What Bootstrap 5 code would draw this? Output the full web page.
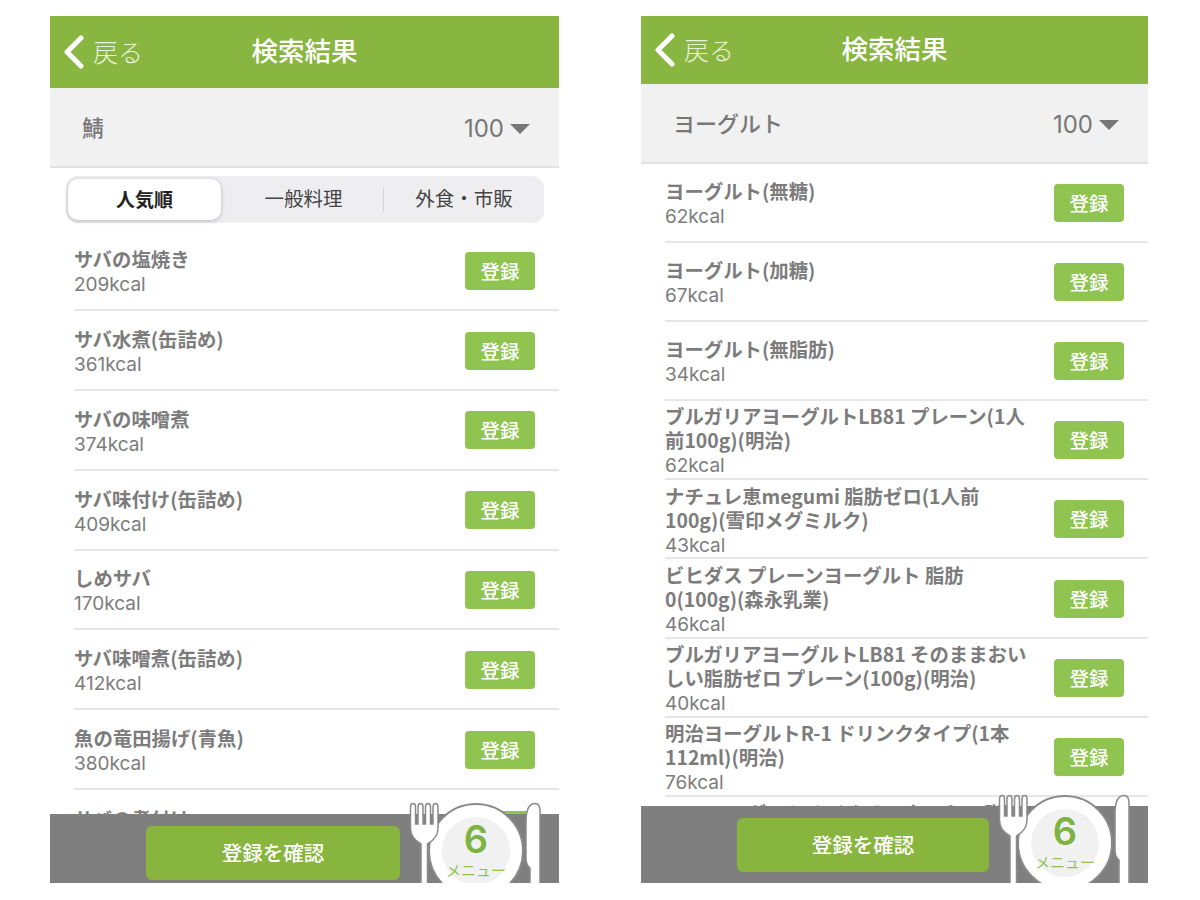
<!DOCTYPE html>
<html lang="ja">
<head>
<meta charset="utf-8">
<title>検索結果</title>
<link rel="stylesheet" href="https://cdn.jsdelivr.net/npm/bootstrap@5.3.0/dist/css/bootstrap.min.css">
<style>
body{background:#fff;font-family:"Noto Sans CJK JP","Noto Sans",sans-serif;color:#777;margin:0;height:900px;overflow:hidden}
.stage{padding:16px 0 0 50px;gap:82px}
.phone{height:867px;overflow:hidden;position:relative;background:#fff}
.phone-a{width:509px}
.phone-b{width:507px}
.topbar{background:#89b640;color:#fff;position:relative;flex:none}
.phone-a .topbar{height:72px}
.phone-b .topbar{height:68px}
.backlink{position:absolute;left:13px;top:50%;transform:translateY(-50%);gap:8px;color:#e9f2d8;font-size:25px;line-height:1;font-weight:300}
.backlink span{padding-bottom:2px}
.screen-title{font-size:26.500px;font-weight:500;line-height:1;padding-bottom:4px}
.phone-a .screen-title{padding-bottom:3px}
.searchband{background:#f1f1f1;border-bottom:2px solid #e2e2e2;height:80px;flex:none;font-size:22px;color:#777;font-weight:500;padding:0 29px 2px 32px}
.countbox{gap:6px;font-family:"Inter","Liberation Sans",sans-serif;font-size:24px;line-height:1;font-weight:400;padding-top:6px}
.caret{width:0;height:0;border-left:10px solid transparent;border-right:10px solid transparent;border-top:10px solid #777}
.segbar{height:47px;margin:8px 15px 8.500px 16px;background:#eeeef0;border-radius:12px;padding:3px 0 3px 2px;display:grid;grid-template-columns:153px 162px 161px;font-size:19.500px;color:#444;flex:none}
.segitem{display:flex;align-items:center;justify-content:center;line-height:1;padding-bottom:3px}
.segitem.is-middle{padding-left:3px}
.segitem.is-on{background:#fff;border-radius:10px;box-shadow:0 1px 4px rgba(0,0,0,.25);color:#222;font-weight:700;font-size:19px}
.segitem.has-rule{border-left:1px solid #d4d4d4;margin:8px 0;padding-bottom:4px}
.resultlist{flex:1 1 auto;min-height:0;overflow:hidden}
.rowitem{height:79.800px;margin-left:24px;padding-right:24px;border-bottom:2px solid #e6e6e6;gap:10px}
.phone-b .rowitem{height:79.200px}
.phone-b .rowitem:first-child{height:78.700px}
.rowitem:last-child{border-bottom:0}
.rowtext{width:362px;color:#7c7c7c;padding-top:4px}
.foodname{font-size:19.400px;font-weight:700;line-height:24px}
.foodcal{font-family:"Inter","Liberation Sans",sans-serif;font-size:19px;line-height:24.500px;padding-top:2px}
.addbtn{background:#8fc451;color:#fff;width:70px;height:38px;border-radius:4px;border:0;font-size:19.500px;font-weight:500;padding:0;line-height:38px;flex:none;margin-top:1px}
.bottombar{background:#7f7f7f;position:relative;flex:none;padding:12px 0 0 96px}
.phone-a .bottombar{height:69px}
.phone-b .bottombar{height:77px}
.confirmbtn{background:#87b53e;color:#fff;height:54px;border:0;border-radius:6px;font-size:20.500px;font-weight:500;padding:0 0 3px;line-height:50px}
.phone-a .confirmbtn{width:254px}
.phone-b .confirmbtn{width:252px}
.tableset{position:absolute;left:357px;top:-12px;width:140px;height:100px}
.tableset svg{position:absolute;left:0;top:0}
.dishcount{position:absolute;left:69px;top:15px;width:80px;margin-left:-40px;text-align:center;color:#7cb342;font-family:"Inter","Liberation Sans",sans-serif;font-size:38px;line-height:44px;font-weight:600}
.dishlabel{position:absolute;left:69px;top:58px;width:80px;margin-left:-40px;text-align:center;color:#8fc451;font-size:15px;line-height:20px;white-space:nowrap}
.phone-b .tableset{left:355px}
</style>
</head>
<body>
<main class="stage d-flex align-items-start">

<section class="phone phone-a d-flex flex-column">
  <header class="topbar d-flex align-items-center justify-content-center">
    <a class="backlink d-flex align-items-center text-decoration-none">
      <svg width="22" height="34" viewBox="0 0 22 34" fill="none"><path d="M18 3 L4 17 L18 31" stroke="#fff" stroke-width="5" stroke-linecap="round" stroke-linejoin="round"/></svg>
      <span>戻る</span>
    </a>
    <div class="screen-title">検索結果</div>
  </header>
  <div class="searchband d-flex align-items-center justify-content-between">
    <span>鯖</span>
    <div class="countbox d-flex align-items-center"><span>100</span><i class="caret"></i></div>
  </div>
  <div class="segbar">
    <div class="segitem is-on">人気順</div>
    <div class="segitem is-middle">一般料理</div>
    <div class="segitem has-rule">外食・市販</div>
  </div>
  <div class="resultlist">
    <div class="rowitem d-flex align-items-center justify-content-between"><div class="rowtext"><div class="foodname">サバの塩焼き</div><div class="foodcal">209kcal</div></div><button class="addbtn">登録</button></div>
    <div class="rowitem d-flex align-items-center justify-content-between"><div class="rowtext"><div class="foodname">サバ水煮(缶詰め)</div><div class="foodcal">361kcal</div></div><button class="addbtn">登録</button></div>
    <div class="rowitem d-flex align-items-center justify-content-between"><div class="rowtext"><div class="foodname">サバの味噌煮</div><div class="foodcal">374kcal</div></div><button class="addbtn">登録</button></div>
    <div class="rowitem d-flex align-items-center justify-content-between"><div class="rowtext"><div class="foodname">サバ味付け(缶詰め)</div><div class="foodcal">409kcal</div></div><button class="addbtn">登録</button></div>
    <div class="rowitem d-flex align-items-center justify-content-between"><div class="rowtext"><div class="foodname">しめサバ</div><div class="foodcal">170kcal</div></div><button class="addbtn">登録</button></div>
    <div class="rowitem d-flex align-items-center justify-content-between"><div class="rowtext"><div class="foodname">サバ味噌煮(缶詰め)</div><div class="foodcal">412kcal</div></div><button class="addbtn">登録</button></div>
    <div class="rowitem d-flex align-items-center justify-content-between"><div class="rowtext"><div class="foodname">魚の竜田揚げ(青魚)</div><div class="foodcal">380kcal</div></div><button class="addbtn">登録</button></div>
    <div class="rowitem d-flex align-items-center justify-content-between"><div class="rowtext"><div class="foodname">サバの煮付け</div><div class="foodcal">250kcal</div></div><button class="addbtn">登録</button></div>
  </div>
  <footer class="bottombar">
    <button class="confirmbtn">登録を確認</button>
    <div class="tableset">
      <svg width="140" height="100" viewBox="0 0 140 100">
        <circle cx="69" cy="49" r="47" fill="#fff" stroke="#8a8a8a" stroke-width="2"/>
        <circle cx="69" cy="49" r="34" fill="#f1f1f1"/>
        <path d="M3.500 5 Q3.500 1.500 6 1.500 Q8.500 1.500 8.500 5 V22 H11 V5 Q11 1.500 13.500 1.500 Q16 1.500 16 5 V22 H18.500 V5 Q18.500 1.500 21 1.500 Q23.500 1.500 23.500 5 V22 H26 V5 Q26 1.500 28.500 1.500 Q31 1.500 31 5 V26 Q31 36 20.500 42 V100 H14 V42 Q3.500 36 3.500 26 Z" fill="#fff" stroke="#8a8a8a" stroke-width="1.500"/>
        <path d="M123 100 V66 Q119 63 119 56 V20 Q119 1.500 128 1.500 Q133 1.500 133 9 V100 Z" fill="#fff" stroke="#8a8a8a" stroke-width="1.500"/>
      </svg>
      <div class="dishcount">6</div>
      <div class="dishlabel">メニュー</div>
    </div>
  </footer>
</section>

<section class="phone phone-b d-flex flex-column">
  <header class="topbar d-flex align-items-center justify-content-center">
    <a class="backlink d-flex align-items-center text-decoration-none">
      <svg width="22" height="34" viewBox="0 0 22 34" fill="none"><path d="M18 3 L4 17 L18 31" stroke="#fff" stroke-width="5" stroke-linecap="round" stroke-linejoin="round"/></svg>
      <span>戻る</span>
    </a>
    <div class="screen-title">検索結果</div>
  </header>
  <div class="searchband d-flex align-items-center justify-content-between">
    <span>ヨーグルト</span>
    <div class="countbox d-flex align-items-center"><span>100</span><i class="caret"></i></div>
  </div>
  <div class="resultlist">
    <div class="rowitem d-flex align-items-center justify-content-between"><div class="rowtext"><div class="foodname">ヨーグルト(無糖)</div><div class="foodcal">62kcal</div></div><button class="addbtn">登録</button></div>
    <div class="rowitem d-flex align-items-center justify-content-between"><div class="rowtext"><div class="foodname">ヨーグルト(加糖)</div><div class="foodcal">67kcal</div></div><button class="addbtn">登録</button></div>
    <div class="rowitem d-flex align-items-center justify-content-between"><div class="rowtext"><div class="foodname">ヨーグルト(無脂肪)</div><div class="foodcal">34kcal</div></div><button class="addbtn">登録</button></div>
    <div class="rowitem d-flex align-items-center justify-content-between"><div class="rowtext"><div class="foodname">ブルガリアヨーグルトLB81 プレーン(1人<br>前100g)(明治)</div><div class="foodcal">62kcal</div></div><button class="addbtn">登録</button></div>
    <div class="rowitem d-flex align-items-center justify-content-between"><div class="rowtext"><div class="foodname">ナチュレ恵megumi 脂肪ゼロ(1人前<br>100g)(雪印メグミルク)</div><div class="foodcal">43kcal</div></div><button class="addbtn">登録</button></div>
    <div class="rowitem d-flex align-items-center justify-content-between"><div class="rowtext"><div class="foodname">ビヒダス プレーンヨーグルト 脂肪<br>0(100g)(森永乳業)</div><div class="foodcal">46kcal</div></div><button class="addbtn">登録</button></div>
    <div class="rowitem d-flex align-items-center justify-content-between"><div class="rowtext"><div class="foodname">ブルガリアヨーグルトLB81 そのままおい<br>しい脂肪ゼロ プレーン(100g)(明治)</div><div class="foodcal">40kcal</div></div><button class="addbtn">登録</button></div>
    <div class="rowitem d-flex align-items-center justify-content-between"><div class="rowtext"><div class="foodname">明治ヨーグルトR-1 ドリンクタイプ(1本<br>112ml)(明治)</div><div class="foodcal">76kcal</div></div><button class="addbtn">登録</button></div>
    <div class="rowitem d-flex align-items-center justify-content-between"><div class="rowtext"><div class="foodname">BMKヨーグルト ふくらみのおいしい脂肪<br>ゼロ プレーン</div><div class="foodcal">50kcal</div></div><button class="addbtn">登録</button></div>
  </div>
  <footer class="bottombar">
    <button class="confirmbtn">登録を確認</button>
    <div class="tableset">
      <svg width="140" height="100" viewBox="0 0 140 100">
        <circle cx="69" cy="49" r="47" fill="#fff" stroke="#8a8a8a" stroke-width="2"/>
        <circle cx="69" cy="49" r="34" fill="#f1f1f1"/>
        <path d="M3.500 5 Q3.500 1.500 6 1.500 Q8.500 1.500 8.500 5 V22 H11 V5 Q11 1.500 13.500 1.500 Q16 1.500 16 5 V22 H18.500 V5 Q18.500 1.500 21 1.500 Q23.500 1.500 23.500 5 V22 H26 V5 Q26 1.500 28.500 1.500 Q31 1.500 31 5 V26 Q31 36 20.500 42 V100 H14 V42 Q3.500 36 3.500 26 Z" fill="#fff" stroke="#8a8a8a" stroke-width="1.500"/>
        <path d="M123 100 V66 Q119 63 119 56 V20 Q119 1.500 128 1.500 Q133 1.500 133 9 V100 Z" fill="#fff" stroke="#8a8a8a" stroke-width="1.500"/>
      </svg>
      <div class="dishcount">6</div>
      <div class="dishlabel">メニュー</div>
    </div>
  </footer>
</section>

</main>
<script src="https://cdn.jsdelivr.net/npm/bootstrap@5.3.0/dist/js/bootstrap.bundle.min.js"></script>
</body>
</html>
